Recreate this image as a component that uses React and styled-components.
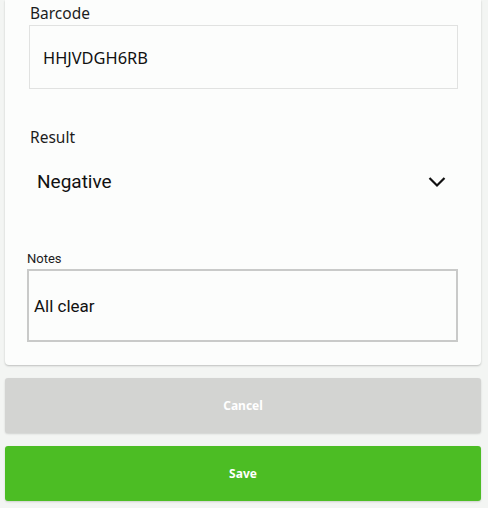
import React from "react";
import styled, { createGlobalStyle } from "styled-components";

const Global = createGlobalStyle`
  html, body { margin: 0; padding: 0; background: #f3f5f3; }
  body { font-family: "Noto Sans", Roboto, sans-serif; color: #1a1a1a; }
`;

const Page = styled.div`
  display: flex;
  flex-direction: column;
  gap: 13px;
  padding: 0 7px 7px 5px;
  width: 488px;
  box-sizing: border-box;
`;

const Card = styled.div`
  background: #fcfdfc;
  border-radius: 0 0 4px 4px;
  box-shadow: 0 1px 2px rgba(0, 0, 0, 0.22);
  padding: 3px 23px 23px 22px;
  display: flex;
  flex-direction: column;
`;

const Field = styled.div`
  display: flex;
  flex-direction: column;
  margin-top: ${(p) => p.$top || 0}px;
  padding-left: ${(p) => p.$indent || 0}px;
`;

const Label = styled.div`
  font-family: ${(p) => (p.$small ? "Roboto" : '"Noto Sans"')}, sans-serif;
  font-size: ${(p) => (p.$small ? 13 : 15.5)}px;
  line-height: ${(p) => (p.$small ? 16 : 20)}px;
  color: #1c1c1c;
  padding-left: ${(p) => p.$indent || 0}px;
`;

const Box = styled.div`
  margin-top: 2px;
  height: ${(p) => p.$h}px;
  box-sizing: border-box;
  border: ${(p) => (p.$strong ? "2px solid #c9cac9" : "1.5px solid #e1e2e1")};
  background: #fcfdfc;
  display: flex;
  align-items: center;
  padding-left: ${(p) => p.$pad}px;
  font-family: ${(p) => (p.$strong ? "Roboto" : '"Noto Sans"')}, sans-serif;
  font-size: ${(p) => p.$fs}px;
  color: #111;
`;

const SelectRow = styled.div`
  margin-top: 14px;
  height: 40px;
  display: flex;
  align-items: center;
  justify-content: space-between;
  padding: 0 12px 0 10px;
  font-family: Roboto, sans-serif;
  font-size: 19px;
  color: #111;
`;

const Chevron = styled.svg`
  width: 18px;
  height: 12px;
  margin-top: 2px;
`;

const Button = styled.button`
  height: 55px;
  border: none;
  border-radius: 3px;
  box-shadow: 0 1px 2px rgba(0, 0, 0, 0.15);
  background: ${(p) => (p.$primary ? "#4cbd24" : "#d3d4d2")};
  color: #fff;
  font-family: "Noto Sans", sans-serif;
  font-weight: 700;
  font-size: 12px;
  display: flex;
  align-items: center;
  justify-content: center;
  padding: 0;
  width: 100%;
`;

export default function App() {
  return (
    <>
      <Global />
      <Page>
        <Card>
          <Field $indent={2}>
            <Label $indent={1}>Barcode</Label>
            <Box $h={64} $pad={13} $fs={16.4}>
              HHJVDGH6RB
            </Box>
          </Field>
          <Field $top={38} $indent={2}>
            <Label $indent={1}>Result</Label>
          </Field>
          <SelectRow>
            <span>Negative</span>
            <Chevron viewBox="0 0 18 12">
              <polyline
                points="1.5,2 9,9.5 16.5,2"
                fill="none"
                stroke="#111"
                strokeWidth="2.2"
              />
            </Chevron>
          </SelectRow>
          <Field $top={50}>
            <Label $small>Notes</Label>
            <Box $h={73} $pad={5} $fs={17} $strong>
              All clear
            </Box>
          </Field>
        </Card>
        <Button>Cancel</Button>
        <Button $primary>Save</Button>
      </Page>
    </>
  );
}
